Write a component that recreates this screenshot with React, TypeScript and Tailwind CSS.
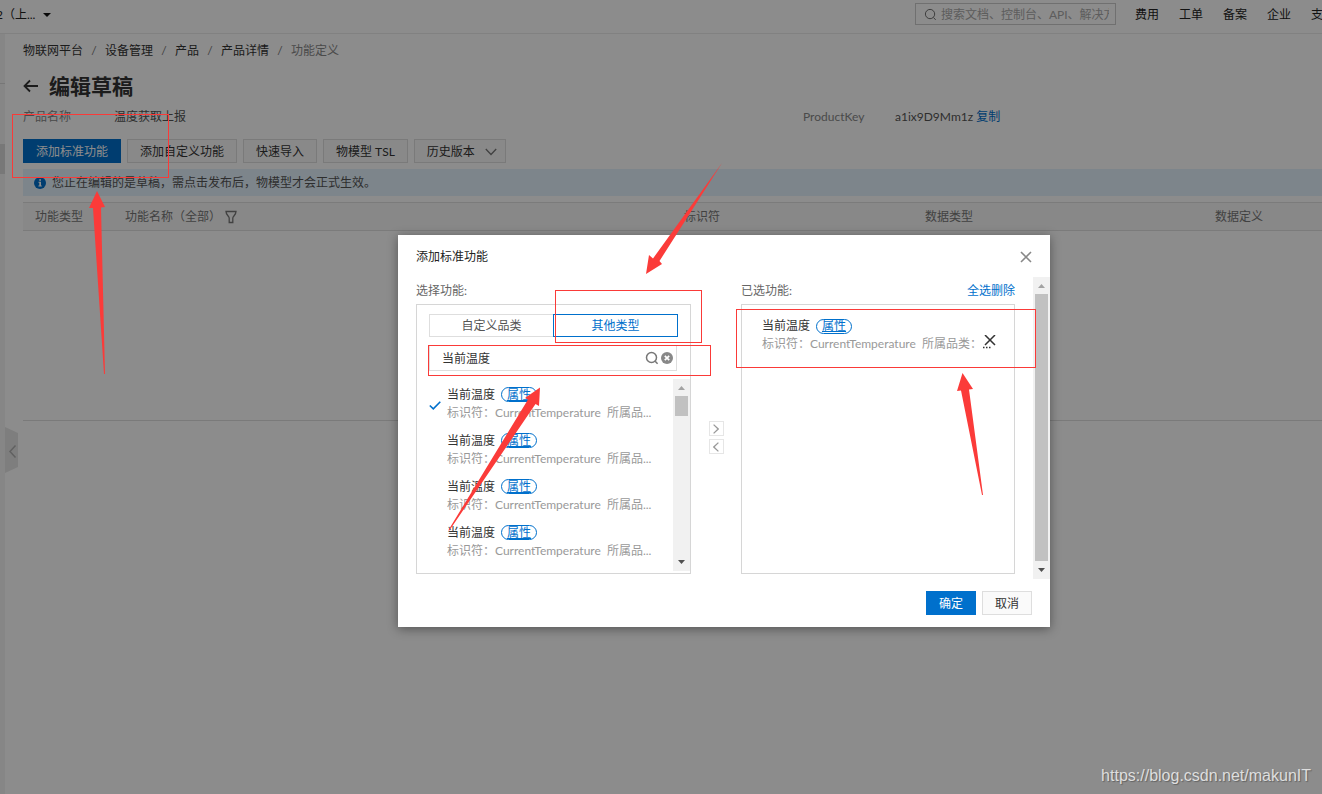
import React from 'react';

const crumbs = ['物联网平台', '设备管理', '产品', '产品详情'];
const navLinks = ['费用', '工单', '备案', '企业', '支持'];

function Tag() {
  return (
    <span className="ml-1.5 inline-flex h-[15px] w-9 items-center justify-center rounded-full border border-[#0070cc] text-xs leading-3 text-[#0070cc] underline underline-offset-1">
      属性
    </span>
  );
}

function SearchIcon({ className }: { className: string }) {
  return (
    <svg viewBox="0 0 14 14" fill="none" stroke="currentColor" className={className} aria-hidden="true">
      <circle cx="6.5" cy="6.5" r="5" />
      <path d="M10.2 10.2 12.6 12.8" />
    </svg>
  );
}

function ScrollTrack({ className, thumb }: { className: string; thumb: string }) {
  return (
    <div className={`flex w-[17px] shrink-0 flex-col items-center bg-[#f1f1f1] ${className}`} aria-hidden="true">
      <svg viewBox="0 0 17 17" className="h-[17px] w-[17px] shrink-0">
        <path d="M5 11h7L8.500 7z" fill="#a3a3a3" />
      </svg>
      <div className={`w-[13px] bg-[#c1c1c1] ${thumb}`} />
      <svg viewBox="0 0 17 17" className="mt-auto h-[17px] w-[17px] shrink-0">
        <path d="M5 6h7L8.500 10z" fill="#505050" />
      </svg>
    </div>
  );
}

function TopBar() {
  return (
    <header className="flex h-[34px] items-start overflow-hidden border-b border-[#ebebeb]">
      <button type="button" className="-ml-1 mt-1.5 flex h-[18px] shrink-0 items-center text-[#222]">
        2（上...
        <svg viewBox="0 0 8 4" className="ml-2 h-1 w-2" fill="#111" aria-hidden="true">
          <path d="M0 0h8L4 4z" />
        </svg>
      </button>
      <label className="ml-auto mt-[3px] flex h-[22px] w-[201px] shrink-0 items-center border border-[#ccc] pl-2 pr-1.5">
        <SearchIcon className="h-[13px] w-[13px] shrink-0 text-[#666]" />
        <input
          aria-label="搜索"
          placeholder="搜索文档、控制台、API、解决方案"
          className="ml-1 w-full min-w-0 bg-transparent pt-px outline-none placeholder:text-[#aaa]"
        />
      </label>
      <nav className="-mr-[13px] ml-[19px] mt-1.5 flex shrink-0 gap-5">
        {navLinks.map((t) => (
          <a key={t} href="#" className="leading-[18px] text-[#222]">
            {t}
          </a>
        ))}
      </nav>
    </header>
  );
}

function PlainButton({ children }: { children: React.ReactNode }) {
  return (
    <button type="button" className="flex h-6 items-center border border-[#dedede] bg-[#fafafa] px-3 pt-px text-[#333]">
      {children}
    </button>
  );
}

function Page() {
  return (
    <div className="flex min-h-screen flex-col bg-white">
      <TopBar />
      <div className="flex grow">
        <aside className="w-[5px] shrink-0 bg-[#f5f5f5]">
          <div className="mt-[49px] border-t border-[#d9d9d9]" />
          <div className="mt-[60px] h-[30px] bg-[#dadada]" />
        </aside>
        <div className="flex w-[18px] shrink-0 flex-col">
          <button type="button" aria-label="收起" className="mt-[393px]">
            <svg viewBox="0 0 13 46" className="h-[46px] w-[13px]" aria-hidden="true">
              <path d="M0 0 13 6V40L0 46z" fill="#e6e6e6" />
              <path d="M10.500 18.500 5 24.500 10.500 30.500" fill="none" stroke="#b0b0b0" strokeWidth="1.500" />
            </svg>
          </button>
        </div>
        <main className="min-w-0 grow pt-2">
          <nav className="flex h-[18px] items-center text-[#333]">
            {crumbs.map((c) => (
              <React.Fragment key={c}>
                <a href="#">{c}</a>
                <span className="w-[22px] text-center text-[#777]">/</span>
              </React.Fragment>
            ))}
            <span className="text-[#888]">功能定义</span>
          </nav>
          <div className="mt-[11px] flex h-[30px] items-center">
            <a href="#" aria-label="返回">
              <svg viewBox="0 0 16 14" className="h-3.5 w-4" fill="none" stroke="#333" strokeWidth="1.800" aria-hidden="true">
                <path d="M15 7H1.500M7 1.500 1.500 7 7 12.500" />
              </svg>
            </a>
            <h1 className="ml-2.5 text-[21px] font-bold leading-[30px] text-[#333]">编辑草稿</h1>
          </div>
          <dl className="mt-[7px] flex h-[18px] items-center">
            <dt className="w-[91px] text-[#888]">产品名称</dt>
            <dd className="w-[689px] text-[#555]">温度获取上报</dd>
            <dt className="w-[92px] text-[#888]">ProductKey</dt>
            <dd className="text-[#555]">
              a1ix9D9Mm1z{' '}
              <a href="#" className="text-[#0070cc]">
                复制
              </a>
            </dd>
          </dl>
          <div className="mt-[13px] flex gap-1.5">
            <button type="button" className="h-6 bg-[#0070cc] px-[13px] pt-px text-white">
              添加标准功能
            </button>
            <PlainButton>添加自定义功能</PlainButton>
            <PlainButton>快速导入</PlainButton>
            <PlainButton>物模型 TSL</PlainButton>
            <PlainButton>
              历史版本
              <svg viewBox="0 0 12 8" className="-mr-1 ml-2.5 h-2 w-3" fill="none" stroke="#777" strokeWidth="1.300" aria-hidden="true">
                <path d="M.8 1 6 6.500 11.200 1" />
              </svg>
            </PlainButton>
          </div>
          <div className="mt-1.5 flex h-[27px] items-center gap-1.5 bg-[#e3f2fd] pl-[11px] text-[#555]">
            <svg viewBox="0 0 12 12" className="h-3 w-3" aria-hidden="true">
              <circle cx="6" cy="6" r="6" fill="#0070cc" />
              <path d="M5.200 2.200h1.800v1.500H5.200zM4.500 4.800H7v3.700h.8v1H4.400v-1h.9V5.800h-.8z" fill="#fff" />
            </svg>
            您正在编辑的是草稿，需点击发布后，物模型才会正式生效。
          </div>
          <table className="mt-1.5 w-full table-fixed border-y border-[#e0e0e0] bg-[#f7f7f7] text-left text-[#777]">
            <thead>
              <tr className="h-7">
                <th className="w-[90px] pl-3 font-normal">功能类型</th>
                <th className="pl-3 font-normal">
                  <span className="flex items-center">
                    功能名称（全部）
                    <svg viewBox="0 0 12 14" className="ml-1 h-3.5 w-3" fill="none" stroke="#777" strokeWidth="1.300" aria-hidden="true">
                      <path d="M1 1.500h10C11 5 8 6 7.800 8v4.500H4.200V8C4 6 1 5 1 1.500z" />
                    </svg>
                  </span>
                </th>
                <th className="w-[241px] pl-3 font-normal">标识符</th>
                <th className="w-[290px] pl-3 font-normal">数据类型</th>
                <th className="w-[119px] pl-3 font-normal">数据定义</th>
              </tr>
            </thead>
          </table>
          <div className="h-[190px] border-b border-[#dedede]" />
        </main>
      </div>
    </div>
  );
}

function Feature({ checked }: { checked: boolean }) {
  return (
    <li className="flex h-[46px] items-center">
      <span className="w-[18px] shrink-0 pt-1">
        {checked && (
          <svg viewBox="0 0 12 9" className="h-[9px] w-3" fill="none" stroke="#0070cc" strokeWidth="1.600" aria-label="已选">
            <path d="M.8 4.500 4.300 7.800 11.300 .8" />
          </svg>
        )}
      </span>
      <div className="min-w-0">
        <div className="flex h-[18px] items-center text-[#333]">
          当前温度
          <Tag />
        </div>
        <div className="h-[17px] whitespace-nowrap leading-[17px] text-[#999]">
          标识符：CurrentTemperature&nbsp; 所属品...
        </div>
      </div>
    </li>
  );
}

function Dialog() {
  return (
    <section
      role="dialog"
      aria-label="添加标准功能"
      className="flex w-[652px] flex-col bg-white shadow-[0_2px_10px_rgba(0,0,0,0.4)]"
    >
      <div className="flex h-[42px] items-center justify-between pl-[18px] pr-[18px] pt-0.5 text-[#222]">
        <h2>添加标准功能</h2>
        <button type="button" aria-label="关闭">
          <svg viewBox="0 0 12 12" className="h-3 w-3" fill="none" stroke="#888" strokeWidth="1.600" aria-hidden="true">
            <path d="M1 1 11 11M11 1 1 11" />
          </svg>
        </button>
      </div>
      <div className="flex h-[302px]">
        <div className="flex grow pl-[18px]">
          <div className="w-[275px]">
            <p className="h-[27px] pt-[5px] leading-[18px] text-[#666]">选择功能:</p>
            <div className="flex h-[270px] flex-col border border-[#d6d6d6] pl-3 pt-[9px]">
              <div className="flex w-[249px]">
                <button type="button" className="h-[23px] grow border border-r-0 border-[#dedede] text-[#555]">
                  自定义品类
                </button>
                <button type="button" className="h-[23px] w-[125px] border border-[#0070cc] text-[#0070cc]">
                  其他类型
                </button>
              </div>
              <div className="mt-2 flex h-[26px] w-[248px] shrink-0 items-center border border-[#dedede] pl-3 pr-[3px]">
                <input aria-label="功能名称" defaultValue="当前温度" className="w-full min-w-0 pt-px text-[#333] outline-none" />
                <button type="button" aria-label="搜索">
                  <SearchIcon className="h-3.5 w-3.5 stroke-[1.500] text-[#777]" />
                </button>
                <button type="button" aria-label="清除" className="ml-0.5">
                  <svg viewBox="0 0 12 12" className="h-3 w-3" aria-hidden="true">
                    <circle cx="6" cy="6" r="6" fill="#888" />
                    <path d="M3.800 3.800l4.400 4.400M8.200 3.800 3.800 8.200" stroke="#fff" strokeWidth="1.700" />
                  </svg>
                </button>
              </div>
              <div className="mt-2 flex h-[192px] overflow-hidden">
                <ul className="grow pt-px">
                  <Feature checked />
                  <Feature checked={false} />
                  <Feature checked={false} />
                  <Feature checked={false} />
                </ul>
                <ScrollTrack className="h-full" thumb="h-5" />
              </div>
            </div>
          </div>
          <div className="flex w-[50px] flex-col items-center gap-[3px] pt-[144px]">
            <button type="button" aria-label="添加" className="flex h-[15px] w-[15px] items-center justify-center border border-[#e6e6e6]">
              <svg viewBox="0 0 6 10" className="h-2.5 w-1.5" fill="none" stroke="#999" strokeWidth="1.300" aria-hidden="true">
                <path d="M.6 .6 5.200 5 .6 9.400" />
              </svg>
            </button>
            <button type="button" aria-label="移除" className="flex h-[15px] w-[15px] items-center justify-center border border-[#e6e6e6]">
              <svg viewBox="0 0 6 10" className="h-2.5 w-1.5" fill="none" stroke="#999" strokeWidth="1.300" aria-hidden="true">
                <path d="M5.400 .6 .8 5 5.400 9.400" />
              </svg>
            </button>
          </div>
          <div className="w-[274px]">
            <div className="flex h-[27px] justify-between pt-[5px] leading-[18px] text-[#666]">
              <p>已选功能:</p>
              <a href="#" className="text-[#0070cc]">
                全选删除
              </a>
            </div>
            <div className="h-[270px] border border-[#d6d6d6] pl-5 pr-[18px] pt-3">
              <div className="flex items-end justify-between">
                <div>
                  <div className="flex h-[18px] items-center text-[#333]">
                    当前温度
                    <Tag />
                  </div>
                  <div className="h-[17px] whitespace-nowrap leading-[17px] text-[#999]">
                    标识符：CurrentTemperature&nbsp; 所属品类：
                  </div>
                </div>
                <button type="button" aria-label="删除" className="shrink-0 pb-[3px] text-[#333]">
                  <svg viewBox="0 0 13 14" className="h-3.5 w-[13px]" fill="none" stroke="currentColor" strokeWidth="1.500" aria-hidden="true">
                    <path d="M2 0 12 10M12 0 2 10" />
                    <path d="M0 12.500h1.500M3 12.500h1.500M6 12.500h1.500" />
                  </svg>
                </button>
              </div>
            </div>
          </div>
        </div>
        <ScrollTrack className="h-full" thumb="h-[267px]" />
      </div>
      <div className="flex h-12 items-center justify-end gap-1.5 pr-[18px]">
        <button type="button" className="h-6 w-[50px] bg-[#0070cc] pt-px text-white">
          确定
        </button>
        <button type="button" className="h-6 w-[50px] border border-[#dedede] bg-[#fafafa] pt-px text-[#333]">
          取消
        </button>
      </div>
    </section>
  );
}

function Marks() {
  return (
    <svg
      viewBox="0 0 1322 794"
      width="1322"
      height="794"
      className="pointer-events-none absolute left-0 top-0 max-w-none"
      aria-hidden="true"
    >
      <g fill="none" stroke="#fa3a38">
        <rect x="12.500" y="114.500" width="156" height="63" />
        <rect x="555.500" y="290.500" width="146" height="52" />
        <rect x="428.500" y="345.500" width="282" height="30" />
        <rect x="736.500" y="309.500" width="299" height="58" />
      </g>
      <g fill="#fb3b39">
        <path d="M97 191 105 207 101 207.500 105 374H104L93 208 89 208z" />
        <path d="M646 274 649 255 653 258.500 722 163 659.500 261 662 264z" />
        <path d="M540 387.500 539 406 535.500 404 449 531 448.500 530 528 399.500 525 398z" />
        <path d="M962.500 373 973 389 969 389.500 983 495H982L961 390.500 957 391z" />
      </g>
    </svg>
  );
}

export default function App() {
  return (
    <div className="relative min-h-screen overflow-hidden text-xs leading-[18px] [font-family:'Lato','Noto_Sans_CJK_SC',sans-serif]">
      <Page />
      <div className="absolute inset-0 bg-black/45 pl-[398px] pt-[235px]">
        <Dialog />
      </div>
      <Marks />
      <p className="absolute bottom-1.5 right-[11px] text-base leading-6 text-[#dedede] [font-family:'Liberation_Sans',sans-serif] [text-shadow:1px_1px_1px_rgba(0,0,0,0.3)]">
        https://blog.csdn.net/makunIT
      </p>
    </div>
  );
}
